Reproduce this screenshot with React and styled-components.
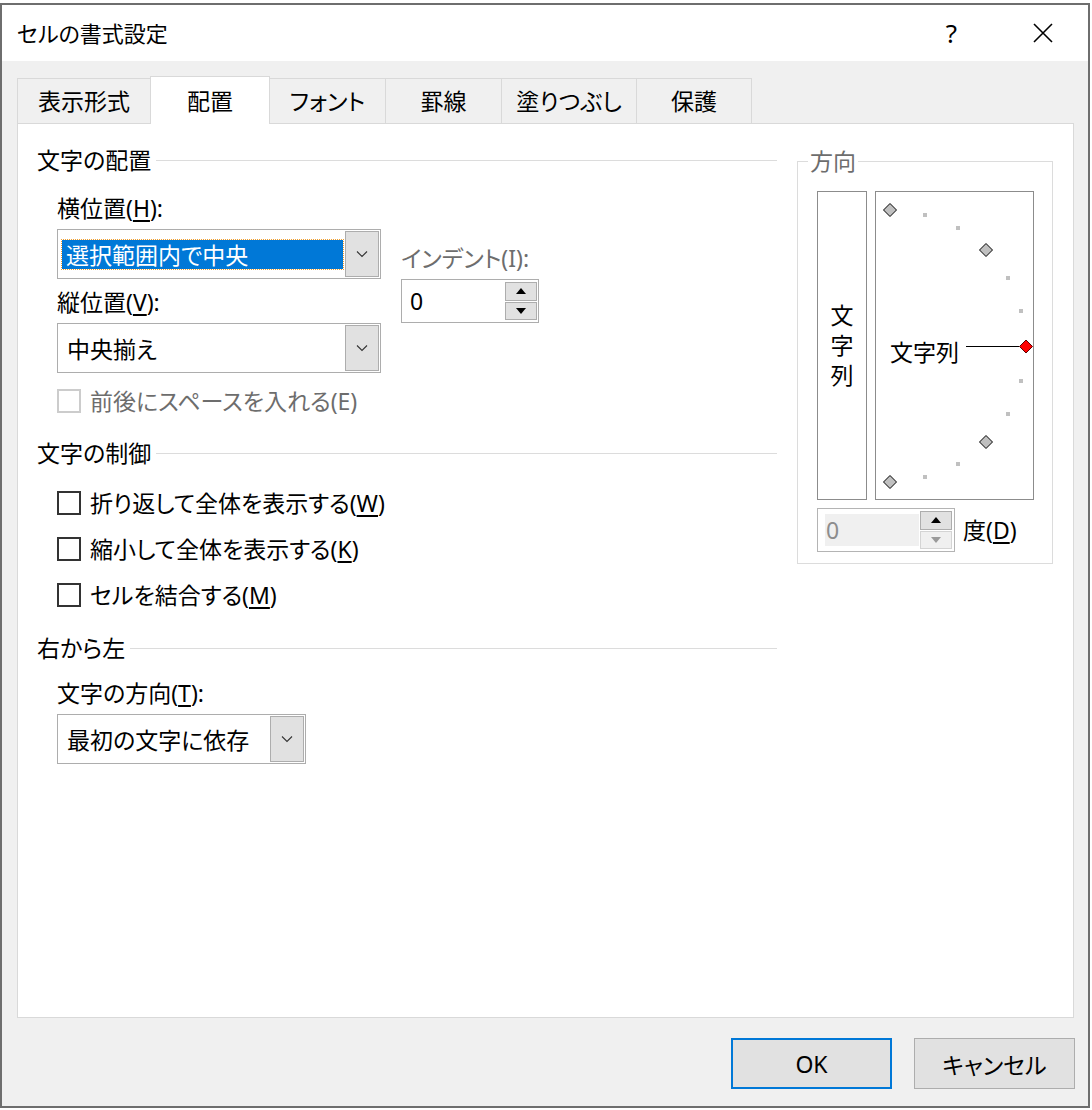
import React from "react";
import styled, { createGlobalStyle } from "styled-components";

const GlobalStyle = createGlobalStyle`
  html, body {
    margin: 0;
    padding: 0;
    background: #ffffff;
  }
  body {
    font-family: "Noto Sans", "Noto Sans CJK JP", sans-serif;
    font-feature-settings: "palt";
    color: #000;
  }
  * {
    box-sizing: border-box;
  }
`;

const TABS = [
  { label: "表示形式", width: 134 },
  { label: "配置", width: 120, active: true },
  { label: "フォント", width: 117 },
  { label: "罫線", width: 117 },
  { label: "塗りつぶし", width: 136 },
  { label: "保護", width: 116 },
];

const DIAMONDS = [
  [14, 18],
  [110, 58],
  [110, 250],
  [14, 290],
];

const DOTS = [
  [49, 23],
  [82, 36],
  [132, 86],
  [145, 119],
  [145, 189],
  [132, 222],
  [82, 272],
  [49, 285],
];

function Chevron() {
  return (
    <svg width="12" height="8" viewBox="0 0 12 8">
      <polyline points="1,1.5 6,6.5 11,1.5" fill="none" stroke="#333" strokeWidth="1.1" />
    </svg>
  );
}

function Arrow({ up, color }) {
  return (
    <svg width="10" height="6" viewBox="0 0 10 6">
      <polygon points={up ? "0,6 10,6 5,0" : "0,0 10,0 5,6"} fill={color} />
    </svg>
  );
}

function diamond(cx, cy, r = 6.5) {
  return `${cx},${cy - r} ${cx + r},${cy} ${cx},${cy + r} ${cx - r},${cy}`;
}

function Select({ width, value, selected }) {
  return (
    <SelectBox $width={width}>
      <SelectValue $selected={selected}>{value}</SelectValue>
      <DropButton>
        <Chevron />
      </DropButton>
    </SelectBox>
  );
}

function Spinner({ value, disabled }) {
  return (
    <SpinBox $disabled={disabled}>
      <SpinField $disabled={disabled}>{value}</SpinField>
      <SpinButtons>
        <SpinButton>
          <Arrow up color="#000" />
        </SpinButton>
        <SpinButton $disabled={disabled}>
          <Arrow color={disabled ? "#9a9a9a" : "#000"} />
        </SpinButton>
      </SpinButtons>
    </SpinBox>
  );
}

function Check({ children, disabled }) {
  return (
    <CheckRow $disabled={disabled}>
      <CheckBox $disabled={disabled} />
      <span>{children}</span>
    </CheckRow>
  );
}

export default function App() {
  return (
    <Page>
      <GlobalStyle />
      <Dialog>
        <TitleBar>
          <Title>セルの書式設定</Title>
          <TitleActions>
            <TitleButton>?</TitleButton>
            <TitleButton>
              <svg width="20" height="20" viewBox="0 0 20 20">
                <path d="M1 1 L19 19 M19 1 L1 19" stroke="#000" strokeWidth="1.6" />
              </svg>
            </TitleButton>
          </TitleActions>
        </TitleBar>

        <TabStrip>
          {TABS.map((t) => (
            <Tab key={t.label} $width={t.width} $active={t.active}>
              {t.label}
            </Tab>
          ))}
        </TabStrip>

        <Panel>
          <LeftColumn>
            <SectionHeader>文字の配置</SectionHeader>
            <AlignRow>
              <FieldStack>
                <Label>
                  横位置(<u>H</u>):
                </Label>
                <Select width={324} value="選択範囲内で中央" selected />
                <Label $gap={8}>
                  縦位置(<u>V</u>):
                </Label>
                <Select width={324} value="中央揃え" />
              </FieldStack>
              <IndentStack>
                <Label $muted>インデント(I):</Label>
                <Spinner value="0" />
              </IndentStack>
            </AlignRow>
            <Indent $top={13}>
              <Check disabled>前後にスペースを入れる(E)</Check>
            </Indent>

            <SectionHeader $top={22}>文字の制御</SectionHeader>
            <CheckList>
              <Check>
                折り返して全体を表示する(<u>W</u>)
              </Check>
              <Check>
                縮小して全体を表示する(<u>K</u>)
              </Check>
              <Check>
                セルを結合する(<u>M</u>)
              </Check>
            </CheckList>

            <SectionHeader $top={23}>右から左</SectionHeader>
            <Indent $top={15}>
              <Label>
                文字の方向(<u>T</u>):
              </Label>
              <Select width={249} value="最初の文字に依存" />
            </Indent>
          </LeftColumn>

          <GroupBox>
            <GroupLegend>方向</GroupLegend>
            <OrientRow>
              <VerticalBox>
                <VerticalText>文字列</VerticalText>
              </VerticalBox>
              <ArcBox>
                <svg width="157" height="307" viewBox="0 0 157 307">
                  {DOTS.map(([x, y]) => (
                    <rect key={`${x}-${y}`} x={x - 2} y={y - 2} width="4" height="4" fill="#c0c0c0" />
                  ))}
                  {DIAMONDS.map(([x, y]) => (
                    <polygon key={`${x}-${y}`} points={diamond(x, y)} fill="#c0c0c0" stroke="#000" strokeWidth="1" />
                  ))}
                  <line x1="90" y1="154.5" x2="143" y2="154.5" stroke="#000" strokeWidth="1" />
                  <polygon points={diamond(150, 154.5)} fill="#ff0000" stroke="#5a0000" strokeWidth="1" />
                </svg>
                <ArcText>文字列</ArcText>
              </ArcBox>
            </OrientRow>
            <DegreeRow>
              <Spinner value="0" disabled />
              <span>
                度(<u>D</u>)
              </span>
            </DegreeRow>
          </GroupBox>
        </Panel>

        <Footer>
          <DialogButton $primary>OK</DialogButton>
          <DialogButton>キャンセル</DialogButton>
        </Footer>
      </Dialog>
    </Page>
  );
}

const Page = styled.div`
  width: 1092px;
  height: 1110px;
  padding-top: 3px;
  background: #ffffff;
  overflow: hidden;
`;

const Dialog = styled.div`
  width: 1090px;
  height: 1105px;
  border: 2px solid #6e6e6e;
  background: #f0f0f0;
  display: flex;
  flex-direction: column;
`;

const TitleBar = styled.div`
  height: 56px;
  flex: none;
  background: #ffffff;
  display: flex;
  align-items: center;
  padding-left: 15px;
`;

const Title = styled.div`
  font-size: 22px;
  line-height: 30px;
`;

const TitleActions = styled.div`
  margin-left: auto;
  display: flex;
  height: 100%;
`;

const TitleButton = styled.div`
  width: 91px;
  height: 100%;
  display: flex;
  align-items: center;
  justify-content: center;
  font-family: "Noto Sans", sans-serif;
  font-size: 26px;
`;

const TabStrip = styled.div`
  flex: none;
  height: 62px;
  display: flex;
  align-items: flex-end;
  padding-left: 15px;
`;

const Tab = styled.div`
  width: ${(p) => p.$width}px;
  height: ${(p) => (p.$active ? 48 : 45)}px;
  margin-left: -1px;
  margin-bottom: ${(p) => (p.$active ? -1 : 0)}px;
  position: relative;
  z-index: ${(p) => (p.$active ? 1 : 0)};
  display: flex;
  align-items: center;
  justify-content: center;
  border: 1px solid #d9d9d9;
  border-bottom: none;
  background: ${(p) => (p.$active ? "#ffffff" : "#f0f0f0")};
  font-size: 23px;
  line-height: 30px;

  &:first-child {
    margin-left: 0;
  }
`;

const Panel = styled.div`
  flex: 1;
  margin: 0 14px 0 15px;
  background: #ffffff;
  border: 1px solid #d9d9d9;
  display: flex;
  align-items: flex-start;
  gap: 20px;
  padding: 21px 0 0 19px;
`;

const LeftColumn = styled.div`
  width: 740px;
  display: flex;
  flex-direction: column;
`;

const SectionHeader = styled.div`
  margin-top: ${(p) => p.$top || 0}px;
  height: 30px;
  display: flex;
  align-items: center;
  font-size: 23px;
  line-height: 30px;

  &::after {
    content: "";
    flex: 1;
    height: 1px;
    margin-left: 5px;
    background: #dcdcdc;
  }
`;

const AlignRow = styled.div`
  margin: 18px 0 0 20px;
  display: flex;
  gap: 20px;
`;

const FieldStack = styled.div`
  display: flex;
  flex-direction: column;
`;

const IndentStack = styled.div`
  margin-top: 50px;
  display: flex;
  flex-direction: column;
`;

const Indent = styled.div`
  margin: ${(p) => p.$top || 0}px 0 0 20px;
  display: flex;
  flex-direction: column;
`;

const Label = styled.div`
  margin-top: ${(p) => p.$gap || 0}px;
  margin-bottom: 6px;
  font-size: 23px;
  line-height: 30px;
  color: ${(p) => (p.$muted ? "#6d6d6d" : "#000")};

  u {
    text-underline-offset: 3px;
  }
`;

const SelectBox = styled.div`
  width: ${(p) => p.$width}px;
  height: 50px;
  border: 1px solid #adadad;
  background: #ffffff;
  display: flex;
  align-items: center;
  padding: 1px;
`;

const SelectValue = styled.div`
  flex: 1;
  height: 29px;
  margin: 0 2px 0 3px;
  padding-left: ${(p) => (p.$selected ? 4 : 5)}px;
  display: flex;
  align-items: center;
  font-size: 23px;
  white-space: nowrap;
  background: ${(p) => (p.$selected ? "#0078d7" : "transparent")};
  color: ${(p) => (p.$selected ? "#ffffff" : "#000")};
  outline: ${(p) => (p.$selected ? "1px dotted #f0a030" : "none")};
`;

const DropButton = styled.div`
  width: 34px;
  align-self: stretch;
  flex: none;
  background: #e1e1e1;
  border: 1px solid #adadad;
  display: flex;
  align-items: center;
  justify-content: center;
`;

const SpinBox = styled.div`
  width: 138px;
  height: 44px;
  border: 1px solid ${(p) => (p.$disabled ? "#b4b4b4" : "#adadad")};
  background: #ffffff;
  display: flex;
  padding: ${(p) => (p.$disabled ? "2px 2px 2px 7px" : "2px 1px 2px 1px")};
`;

const SpinField = styled.div`
  flex: 1;
  margin: ${(p) => (p.$disabled ? "3px 1px 3px 0" : "0")};
  padding-left: ${(p) => (p.$disabled ? 1 : 7)}px;
  display: flex;
  align-items: center;
  font-family: "Noto Sans", sans-serif;
  font-size: 23px;
  background: ${(p) => (p.$disabled ? "#f0f0f0" : "transparent")};
  color: ${(p) => (p.$disabled ? "#8d8d8d" : "#000")};
`;

const SpinButtons = styled.div`
  width: 32px;
  display: flex;
  flex-direction: column;
  gap: 1px;
`;

const SpinButton = styled.div`
  flex: 1;
  display: flex;
  align-items: center;
  justify-content: center;
  background: ${(p) => (p.$disabled ? "#f0f0f0" : "#e1e1e1")};
  border: 1px solid ${(p) => (p.$disabled ? "#d4d4d4" : "#adadad")};
`;

const CheckList = styled.div`
  margin: 20px 0 0 20px;
  display: flex;
  flex-direction: column;
  gap: 16px;
`;

const CheckRow = styled.div`
  height: 30px;
  display: flex;
  align-items: center;
  gap: 9px;
  font-size: 23px;
  line-height: 30px;
  color: ${(p) => (p.$disabled ? "#6d6d6d" : "#000")};

  u {
    text-underline-offset: 3px;
  }
`;

const CheckBox = styled.span`
  width: 24px;
  height: 24px;
  flex: none;
  background: #ffffff;
  border: 2px solid ${(p) => (p.$disabled ? "#cccccc" : "#333333")};
`;

const GroupBox = styled.fieldset`
  width: 256px;
  margin: 1px 0 0 0;
  padding: 15px 18px 11px 19px;
  border: 1px solid #dcdcdc;
  min-width: 0;
`;

const GroupLegend = styled.legend`
  margin-left: -9px;
  padding: 0 2px;
  font-size: 23px;
  line-height: 30px;
  color: #6d6d6d;
`;

const OrientRow = styled.div`
  display: flex;
  gap: 8px;
`;

const VerticalBox = styled.div`
  width: 51px;
  height: 309px;
  border: 1px solid #8c8c8c;
  display: flex;
  align-items: center;
  justify-content: center;
  padding-top: 6px;
`;

const VerticalText = styled.span`
  writing-mode: vertical-rl;
  font-family: "Noto Sans CJK JP", sans-serif;
  font-feature-settings: normal;
  font-size: 23px;
  line-height: 30px;
  letter-spacing: 7px;
`;

const ArcBox = styled.div`
  position: relative;
  width: 159px;
  height: 309px;
  border: 1px solid #8c8c8c;

  svg {
    display: block;
  }
`;

const ArcText = styled.span`
  position: absolute;
  left: 14px;
  top: 145px;
  font-size: 23px;
  line-height: 30px;
`;

const DegreeRow = styled.div`
  margin-top: 8px;
  display: flex;
  align-items: center;
  gap: 8px;
  font-size: 23px;
  line-height: 30px;

  u {
    text-underline-offset: 3px;
  }
`;

const Footer = styled.div`
  flex: none;
  display: flex;
  justify-content: flex-end;
  gap: 22px;
  padding: 20px 13px 17px 0;
`;

const DialogButton = styled.div`
  width: 161px;
  height: 51px;
  display: flex;
  align-items: center;
  justify-content: center;
  background: #e1e1e1;
  border: ${(p) => (p.$primary ? "2px solid #0078d7" : "1px solid #adadad")};
  font-size: 23px;
`;
